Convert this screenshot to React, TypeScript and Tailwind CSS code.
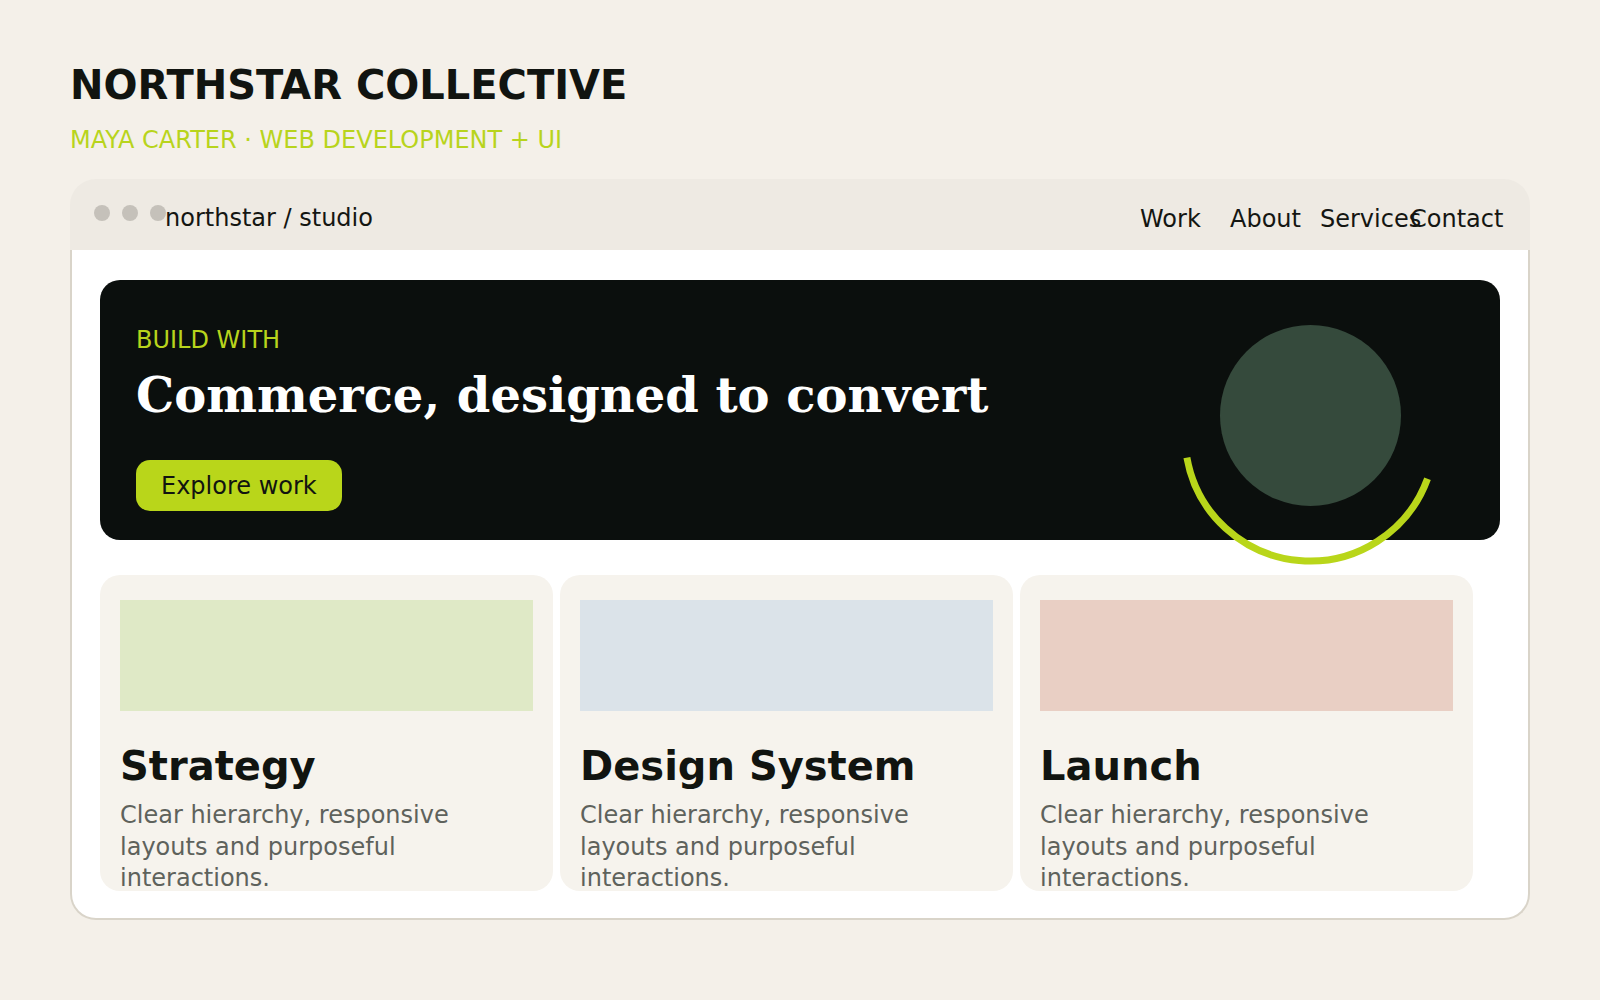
import React from "react";

const sans = "font-['DejaVu_Sans','Liberation_Sans',sans-serif]";

const services = [
  { title: "Strategy", swatch: "bg-[#dfe9c6]" },
  { title: "Design System", swatch: "bg-[#dbe3e9]" },
  { title: "Launch", swatch: "bg-[#e9cfc4]" },
];

const nav = ["Work", "About", "Services", "Contact"];

export default function App() {
  return (
    <div className={`min-h-screen bg-[#f4f0e9] px-[70px] pt-[61px] ${sans}`}>
      {/* Heading */}
      <h1 className="text-[40px] leading-[48px] font-bold text-[#111410]">NORTHSTAR COLLECTIVE</h1>
      <p className="mt-[17px] text-[24px] leading-[29px] text-[#b8d41c]">MAYA CARTER · WEB DEVELOPMENT + UI</p>

      {/* Browser window */}
      <div className="mt-[24px] flex flex-col">
        <div className="flex h-[71px] items-start justify-between rounded-t-[26px] bg-[#eeeae3] pl-[24px] pr-[30px]">
          <div className="flex items-start">
            <div className="mt-[26px] flex gap-[12px]">
              <span className="h-[16px] w-[16px] rounded-full bg-[#c5c1ba]" />
              <span className="h-[16px] w-[16px] rounded-full bg-[#c5c1ba]" />
              <span className="h-[16px] w-[16px] rounded-full bg-[#c5c1ba]" />
            </div>
            <span className="-ml-[1px] mt-[25px] text-[24px] leading-[28px] text-[#141612]">northstar / studio</span>
          </div>
          <nav className="mt-[26px] grid grid-cols-[90px_90px_90px_90px] text-[24px] leading-[28px] text-[#141612]">
            {nav.map(n => (
              <span key={n} className="whitespace-nowrap">{n}</span>
            ))}
          </nav>
        </div>

        <div className="rounded-b-[26px] border-x-2 border-b-2 border-[#d9d4c9] bg-white px-[28px] pb-[27px] pt-[30px]">
          {/* Hero */}
          <div className="relative h-[260px] rounded-[20px] bg-[#0b0f0d] pl-[36px] pt-[46px]">
            <svg className="pointer-events-none absolute left-0 top-0 overflow-visible" width="1400" height="260">
              <circle cx="1210.5" cy="135.5" r="90.5" fill="#354a3c" />
              <path d="M 1327.5 198.75 A 125 125 0 0 1 1086.9 177.7" fill="none" stroke="#b9d61a" strokeWidth="7" />
            </svg>
            <div className="relative">
              <p className="text-[24px] leading-[29px] text-[#b8d41c]">BUILD WITH</p>
              <h2 className="mt-[11px] font-['DejaVu_Serif','Liberation_Serif',serif] text-[48px] font-bold leading-[58px] text-white">
                Commerce, designed to convert
              </h2>
              <button className="mt-[36px] flex h-[51px] items-center rounded-[14px] bg-[#b9d61a] px-[25px] text-[24px] leading-[28px] text-[#111410]">
                Explore work
              </button>
            </div>
          </div>

          {/* Cards */}
          <div className="mt-[35px] flex gap-[7px]">
            {services.map(s => (
              <div key={s.title} className="h-[316px] w-[453px] rounded-[20px] bg-[#f6f3ed] px-[20px] pt-[25px]">
                <div className={`h-[111px] ${s.swatch}`} />
                <h3 className="mt-[31px] text-[40px] font-bold leading-[48px] text-[#111410]">{s.title}</h3>
                <p className="mt-[10px] text-[24px] leading-[1.32] text-[#5e625c]">
                  Clear hierarchy, responsive layouts and purposeful interactions.
                </p>
              </div>
            ))}
          </div>
        </div>
      </div>
    </div>
  );
}
